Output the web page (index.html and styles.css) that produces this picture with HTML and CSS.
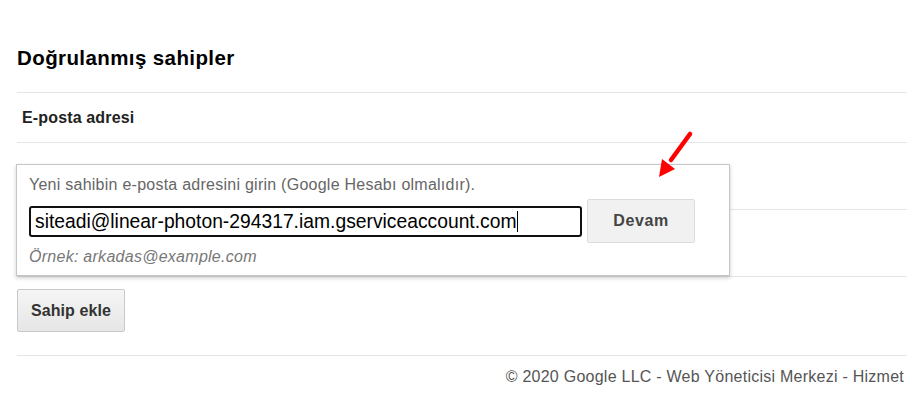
FILE: index.html
```html
<!DOCTYPE html>
<html lang="tr">
<head>
  <meta charset="UTF-8">
  <title>Doğrulanmış sahipler</title>
  <link rel="stylesheet" href="styles.css">
</head>
<body>
  <div class="page">
    <h2 class="title">Doğrulanmış sahipler</h2>

    <div class="owners">
      <table class="owner-table">
        <thead>
          <tr><th>E-posta adresi</th></tr>
        </thead>
        <tbody>
          <tr><td></td></tr>
          <tr><td></td></tr>
        </tbody>
      </table>

      <div class="add-popup">
        <div class="hint">Yeni sahibin e-posta adresini girin (Google Hesabı olmalıdır).</div>
        <div class="add-row">
          <div class="email-input">siteadi@linear-photon-294317.iam.gserviceaccount.com<span class="caret"></span></div>
          <button class="btn btn-next">Devam</button>
        </div>
        <div class="example">Örnek: arkadas@example.com</div>
      </div>

      <!-- red arrow drawn on top of the screenshot -->
      <svg class="arrow" width="60" height="60" viewBox="0 0 60 60">
        <line x1="50" y1="9" x2="31" y2="35" stroke="#f00" stroke-width="4.5" stroke-linecap="round"/>
        <polygon points="19,52 22,34 35,44" fill="#f00"/>
      </svg>
    </div>

    <button class="btn btn-add">Sahip ekle</button>

    <footer>
      © 2020 Google LLC - Web Yöneticisi Merkezi - Hizmet
    </footer>
  </div>
</body>
</html>
```

FILE: styles.css
```css
body {
  font-family: Arial, "Liberation Sans", sans-serif;
  background: #fff;
  color: #222;
  margin: 0;
  padding: 0;
  overflow: hidden;
}
.page {
  padding: 46px 0 0 17px;
}
.title {
  font-size: 20.5px;
  letter-spacing: 0.4px;
  line-height: 24px;
  font-weight: bold;
  color: #000;
  margin: 0 0 22px 0;
}
.owners {
  position: relative;
}
.owner-table {
  width: 100%;
  border-collapse: collapse;
}
.owner-table th, .owner-table td {
  border-top: 1px solid #e5e5e5;
  border-bottom: 1px solid #e5e5e5;
  text-align: left;
  padding: 0 0 0 5px;
}
.owner-table th {
  height: 49px;
  font-size: 16px;
  letter-spacing: 0.15px;
  color: #222;
}
.owner-table td {
  height: 66px;
}
.add-popup {
  position: absolute;
  left: -1px;
  top: 72px;
  width: 688px;
  padding: 10px 12px 8px 12px;
  background: #fff;
  border: 1px solid #c6c6c6;
  box-shadow: 0 2px 4px rgba(0, 0, 0, 0.2);
}
.hint {
  font-size: 16px;
  letter-spacing: 0.25px;
  line-height: 20px;
  color: #666;
}
.add-row {
  display: flex;
  align-items: center;
  gap: 5px;
  margin-top: 4px;
}
.email-input {
  width: 545px;
  height: 27px;
  line-height: 27px;
  padding: 0 0 0 4px;
  border: 2px solid #111;
  border-radius: 3px;
  font-size: 19.3px;
  color: #000;
  white-space: nowrap;
  overflow: hidden;
}
.caret {
  display: inline-block;
  width: 1px;
  height: 21px;
  background: #000;
  vertical-align: -4px;
}
.btn {
  font-family: Arial, "Liberation Sans", sans-serif;
  font-weight: bold;
  font-size: 16px;
  cursor: pointer;
  border-radius: 2px;
}
.btn-next {
  width: 108px;
  height: 44px;
  background: #f1f1f1;
  border: 1px solid #dcdcdc;
  color: #444;
  letter-spacing: 0.6px;
}
.example {
  margin-top: 4px;
  font-size: 16px;
  letter-spacing: 0.27px;
  line-height: 20px;
  font-style: italic;
  color: #777;
}
.arrow {
  position: absolute;
  left: 623px;
  top: 33px;
}
.btn-add {
  display: block;
  margin-top: 12px;
  width: 108px;
  height: 43px;
  background: linear-gradient(#f5f5f5, #e6e6e6);
  border: 1px solid #c9c9c9;
  color: #333;
  letter-spacing: 0.1px;
}
footer {
  margin-top: 23px;
  border-top: 1px solid #e5e5e5;
  padding: 12px 3px 0 0;
  text-align: right;
  font-size: 16px;
  letter-spacing: 0.25px;
  color: #555;
}
```
